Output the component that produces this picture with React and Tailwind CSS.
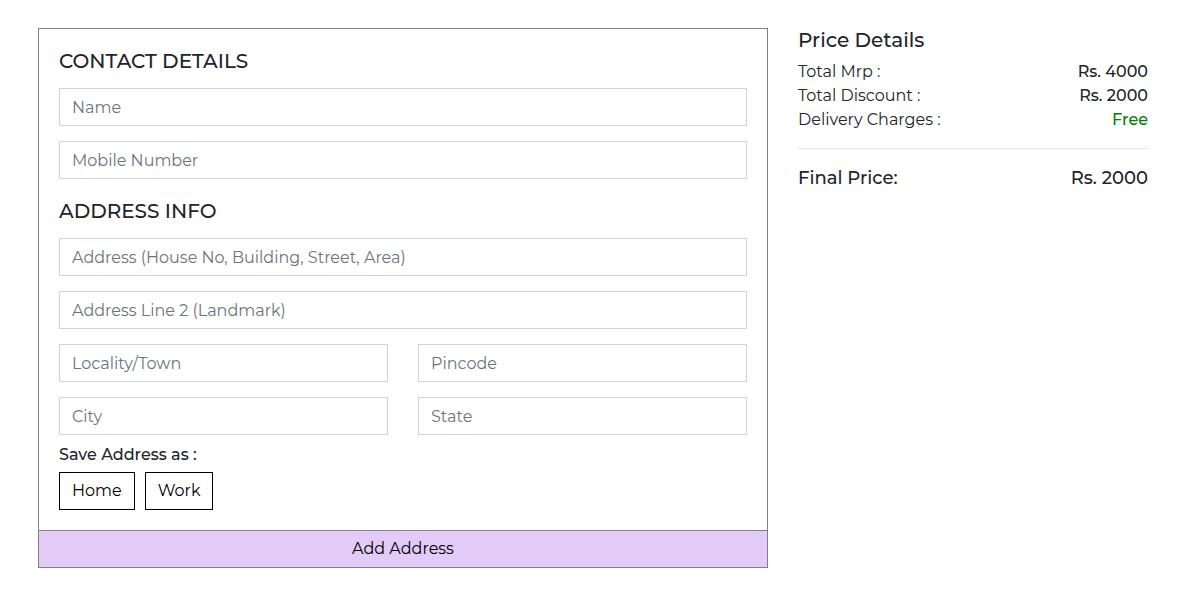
const font = "font-['Montserrat','Inter',sans-serif]";

function Field({ label, type = 'text' }) {
  return (
    <input
      type={type}
      aria-label={label}
      placeholder={label}
      className="block h-[38px] w-full min-w-0 border border-[#ced4da] bg-white px-3 text-base text-[#495057] outline-none placeholder:text-[#6c757d] placeholder:opacity-100"
    />
  );
}

function PriceRow({ label, value, valueClass = '' }) {
  return (
    <div className="flex justify-between">
      <dt>{label}</dt>
      <dd className={`font-medium ${valueClass}`}>{value}</dd>
    </div>
  );
}

export default function App() {
  return (
    <main className={`${font} grid grid-cols-[73fr_35fr] items-start gap-[30px] pt-7 pr-[34px] pl-[38px] text-base text-[#212529]`}>
      <form className="min-w-0 border border-[#808080]" onSubmit={(e) => e.preventDefault()}>
        <div className="p-5">
          <h2 className="mb-[15px] text-xl leading-6 font-medium">CONTACT DETAILS</h2>
          <div className="grid gap-[15px]">
            <Field label="Name" />
            <Field label="Mobile Number" type="tel" />
          </div>
          <h2 className="mt-5 mb-[15px] text-xl leading-6 font-medium">ADDRESS INFO</h2>
          <div className="grid gap-[15px]">
            <Field label="Address (House No, Building, Street, Area)" />
            <Field label="Address Line 2 (Landmark)" />
            <div className="grid grid-cols-2 gap-x-[30px] gap-y-[15px]">
              <Field label="Locality/Town" />
              <Field label="Pincode" />
              <Field label="City" />
              <Field label="State" />
            </div>
          </div>
          <p className="mt-2 mb-[5px] font-medium">Save Address as :</p>
          <div className="flex gap-2.5">
            <button type="button" className="h-[38px] border border-black px-3 text-black">Home</button>
            <button type="button" className="h-[38px] border border-black px-3 text-black">Work</button>
          </div>
        </div>
        <button type="submit" className="block h-[37px] w-full border-t border-[#808080] bg-[#e2cbf7] text-black">
          Add Address
        </button>
      </form>
      <section className="min-w-0">
        <h2 className="mb-2 text-xl leading-6 font-medium">Price Details</h2>
        <dl>
          <PriceRow label="Total Mrp :" value="Rs. 4000" />
          <PriceRow label="Total Discount :" value="Rs. 2000" />
          <PriceRow label="Delivery Charges :" value="Free" valueClass="text-[#008000]" />
          <div className="mt-4 flex justify-between border-t border-black/10 pt-4 text-lg leading-[26px] font-medium">
            <dt>Final Price:</dt>
            <dd>Rs. 2000</dd>
          </div>
        </dl>
      </section>
    </main>
  );
}
